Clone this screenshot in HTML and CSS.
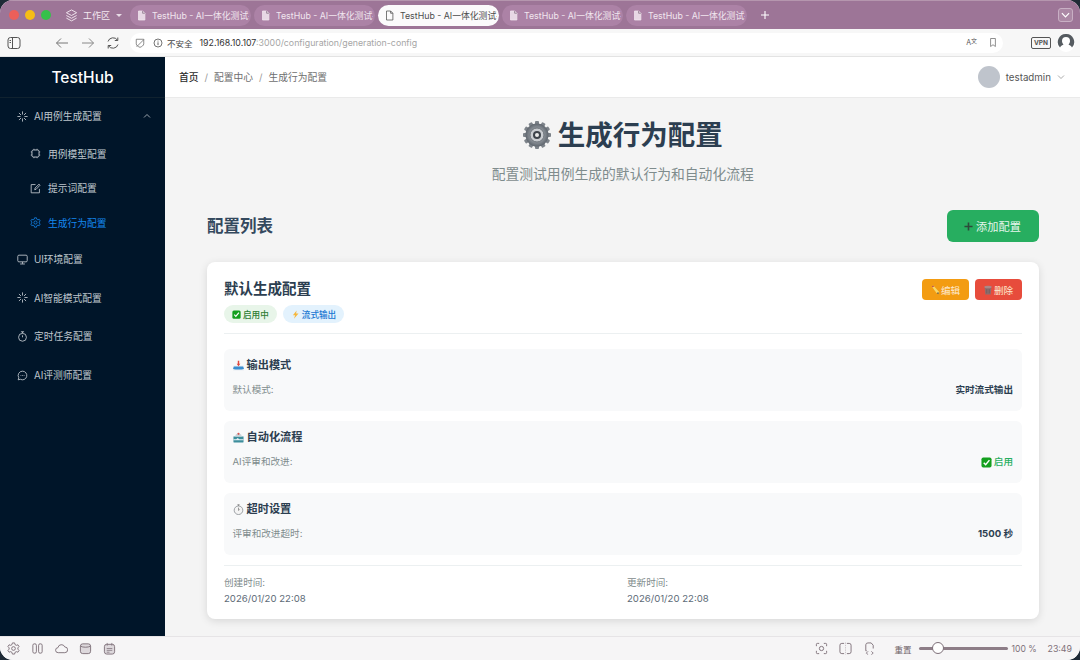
FILE: index.html
```html
<!DOCTYPE html>
<html lang="zh-CN">
<head>
<meta charset="utf-8">
<title>TestHub</title>
<link rel="stylesheet" href="styles.css">
</head>
<body>
<svg class="defs" width="0" height="0" aria-hidden="true">
  <defs>
    <symbol id="doc" viewBox="0 0 12 14"><path d="M2 1h5.5L10.5 4v9H2z" fill="currentColor" fill-opacity=".85" stroke="currentColor" stroke-width="1"/><path d="M7.5 1v3h3" fill="none" stroke="#6d5569" stroke-width=".8"/></symbol>
    <symbol id="spark" viewBox="0 0 14 14"><path d="M7 1v3M7 10v3M1 7h3M10 7h3M2.8 2.8l2 2M9.2 9.2l2 2M11.2 2.8l-2 2M4.8 9.2l-2 2" fill="none" stroke="currentColor" stroke-width="1.1" stroke-linecap="round"/></symbol>
    <symbol id="check" viewBox="0 0 12 12"><rect x=".5" y=".5" width="11" height="11" rx="2" fill="#14a01e"/><path d="M3 6.2l2.1 2.2L9.2 3.4" fill="none" stroke="#fff" stroke-width="1.6"/></symbol>
    <radialGradient id="gearfill"><stop offset="0" stop-color="#e6e8ea"/><stop offset=".6" stop-color="#8d939a"/><stop offset="1" stop-color="#5f666e"/></radialGradient>
  </defs>
</svg>
<div class="window">
  <header class="tabbar">
    <div class="lights"><i class="light red"></i><i class="light yellow"></i><i class="light green"></i></div>
    <svg class="ic-workspace" viewBox="0 0 14 14"><path d="M7 1l5.5 3L7 7 1.500 4zM1.500 7L7 10l5.500-3M1.500 9.800L7 12.800l5.500-3" fill="none" stroke="currentColor" stroke-width="1"/></svg>
    <span class="workspace">工作区</span>
    <i class="caret"></i>
    <div class="tabs">
      <div class="tab"><svg class="tab-ic"><use href="#doc"/></svg><span class="tab-t">TestHub - AI一体化测试平台</span></div>
      <div class="tab"><svg class="tab-ic"><use href="#doc"/></svg><span class="tab-t">TestHub - AI一体化测试平台</span></div>
      <div class="tab active"><svg class="tab-ic" viewBox="0 0 12 14"><path d="M2 1h5.500L10.500 4v9H2z M7.500 1v3h3" fill="none" stroke="currentColor"/></svg><span class="tab-t">TestHub - AI一体化测试平台</span></div>
      <div class="tab"><svg class="tab-ic"><use href="#doc"/></svg><span class="tab-t">TestHub - AI一体化测试平台</span></div>
      <div class="tab"><svg class="tab-ic"><use href="#doc"/></svg><span class="tab-t">TestHub - AI一体化测试平台</span></div>
      <svg class="plus" viewBox="0 0 10 10"><path d="M5 1v8M1 5h8" stroke="#fff" stroke-width="1.100"/></svg>
    </div>
    <div class="tab-menu"><svg viewBox="0 0 10 10"><path d="M2 3.500L5 6.500 8 3.500" fill="none" stroke="#fff" stroke-width="1"/></svg></div>
  </header>

  <nav class="toolbar">
    <svg class="tool t-side" viewBox="0 0 14 14"><rect x="1" y="1.500" width="12" height="11" rx="2.500" fill="none" stroke="currentColor"/><path d="M5.500 1.500v11M2.500 4.500h1.500M2.500 6.500h1.500" stroke="currentColor" fill="none"/></svg>
    <svg class="tool t-back" viewBox="0 0 14 14"><path d="M13 7H1.500M6 2.500L1.500 7 6 11.500" fill="none" stroke="currentColor"/></svg>
    <svg class="tool t-fwd" viewBox="0 0 14 14"><path d="M1 7h11.500M8 2.500L12.500 7 8 11.500" fill="none" stroke="currentColor"/></svg>
    <svg class="tool t-rel" viewBox="0 0 14 14"><path d="M2 5.500A5.300 5.300 0 0 1 11.500 4.200M12 8.500A5.300 5.300 0 0 1 2.500 9.800M11.800 1.500v3h-3M2.200 12.500v-3h3" fill="none" stroke="currentColor"/></svg>
    <div class="address">
      <svg class="a-shield" viewBox="0 0 12 12"><path d="M1.500 1.500h9v5.500c0 2-2.500 3.500-4.500 4.200-2-.7-4.500-2.200-4.500-4.200zM2 10.500L10.500 2" fill="none" stroke="currentColor" stroke-width=".9"/></svg>
      <svg class="a-info" viewBox="0 0 12 12"><circle cx="6" cy="6" r="4.800" fill="none" stroke="currentColor" stroke-width=".9"/><path d="M6 5.200v3.300M6 3.200v1" stroke="currentColor" stroke-width="1"/></svg>
      <span class="insecure">不安全</span>
      <span class="url"><b>192.168.10.107</b>:3000/configuration/generation-config</span>
      <span class="a-space"></span>
      <span class="a-trans"><small>A</small><sup>文</sup></span>
      <svg class="a-mark" viewBox="0 0 10 12"><path d="M2 1h6v10L5 8.800 2 11z" fill="none" stroke="currentColor" stroke-width=".9"/></svg>
    </div>
    <span class="vpn">VPN</span>
    <svg class="t-user" viewBox="0 0 18 18"><circle cx="9" cy="9" r="9" fill="#fff"/><path d="M9 0a8 8 0 0 0-6 13.500c1-1.800 2.500-2.500 3.500-3-1-1-1.500-2.200-1.500-3.500a4 4 0 0 1 8 0c0 1.300-.5 2.500-1.500 3.500 1 .5 2.500 1.200 3.500 3A8 8 0 0 0 9 0z" fill="#555b60"/></svg>
  </nav>

  <div class="app">
    <aside class="sidebar">
      <div class="logo">TestHub</div>
      <ul class="menu">
        <li class="item"><svg class="m-ic"><use href="#spark"/></svg><span>AI用例生成配置</span><svg class="chev" viewBox="0 0 8 6"><path d="M1 4.500L4 1.500l3 3" fill="none" stroke="currentColor" stroke-width=".8"/></svg></li>
        <li class="item sub"><svg class="m-ic" viewBox="0 0 14 14"><rect x="2.500" y="2.500" width="9" height="9" rx="2" fill="none" stroke="currentColor" stroke-width="1.200"/><path d="M5 1v1.500M9 1v1.500M5 11.500V13M9 11.500V13M1 5h1.500M1 9h1.500M11.500 5H13M11.500 9H13" stroke="currentColor"/></svg><span>用例模型配置</span></li>
        <li class="item sub"><svg class="m-ic" viewBox="0 0 14 14"><path d="M12 7.500V12.500H1.500V2H7M6 8.500l.4-2L11.500 1.500 12.800 2.800 7.800 8z" fill="none" stroke="currentColor" stroke-width="1.100"/></svg><span>提示词配置</span></li>
        <li class="item sub current"><svg class="m-ic" viewBox="0 0 14 14"><path d="M5.800 1h2.400l.4 1.800 1.500.8 1.700-.6 1.200 2-1.300 1.300v1.400l1.300 1.300-1.200 2-1.700-.6-1.500.8L8.200 13H5.800l-.4-1.800-1.500-.8-1.700.6-1.200-2L2.300 7.700V6.300L1 5l1.200-2 1.700.6 1.500-.8z" fill="none" stroke="currentColor"/><circle cx="7" cy="7" r="2" fill="none" stroke="currentColor"/></svg><span>生成行为配置</span></li>
        <li class="item after"><svg class="m-ic" viewBox="0 0 14 14"><rect x="1" y="1.500" width="12" height="8.500" rx="1.500" fill="none" stroke="currentColor" stroke-width="1.100"/><path d="M7 10v2.500M4 12.700h6" stroke="currentColor" stroke-width="1.100"/></svg><span>UI环境配置</span></li>
        <li class="item"><svg class="m-ic"><use href="#spark"/></svg><span>AI智能模式配置</span></li>
        <li class="item"><svg class="m-ic" viewBox="0 0 14 14"><circle cx="7" cy="8" r="5" fill="none" stroke="currentColor" stroke-width="1.100"/><path d="M5 1h4M7 1v2M7 5.500V8" stroke="currentColor" stroke-width="1.100"/></svg><span>定时任务配置</span></li>
        <li class="item"><svg class="m-ic" viewBox="0 0 14 14"><path d="M7 1.500a5.500 5.500 0 1 1-2.700 10.300L1.500 12.500l.8-2.600A5.500 5.500 0 0 1 7 1.500z" fill="none" stroke="currentColor" stroke-width="1.100"/><path d="M4.500 7h1M6.500 7h1M8.500 7h1" stroke="currentColor"/></svg><span>AI评测师配置</span></li>
      </ul>
    </aside>

    <div class="main">
      <div class="topbar">
        <div class="crumbs"><b>首页</b><i>/</i><span>配置中心</span><i>/</i><span>生成行为配置</span></div>
        <div class="user"><i class="avatar"></i><span>testadmin</span><svg class="user-chev" viewBox="0 0 8 6"><path d="M1 1.500L4 4.500l3-3" fill="none" stroke="currentColor" stroke-width=".7"/></svg></div>
      </div>

      <main class="content">
        <h1 class="title">
          <svg class="gear" viewBox="0 0 28 28"><g fill="#7d838a"><rect x="12" y="0" width="4" height="28" rx="1"/><rect x="12" y="0" width="4" height="28" rx="1" transform="rotate(30 14 14)"/><rect x="12" y="0" width="4" height="28" rx="1" transform="rotate(60 14 14)"/><rect x="12" y="0" width="4" height="28" rx="1" transform="rotate(90 14 14)"/><rect x="12" y="0" width="4" height="28" rx="1" transform="rotate(120 14 14)"/><rect x="12" y="0" width="4" height="28" rx="1" transform="rotate(150 14 14)"/></g><circle cx="14" cy="14" r="11.500" fill="url(#gearfill)"/><circle cx="14" cy="14" r="7" fill="#c9ccd0" stroke="#6e747b"/><circle cx="14" cy="14" r="4" fill="#3c4249"/><circle cx="14" cy="14" r="2" fill="#e8e8e8"/></svg>
          <span>生成行为配置</span>
        </h1>
        <p class="subtitle">配置测试用例生成的默认行为和自动化流程</p>

        <div class="list-head">
          <h2>配置列表</h2>
          <button class="add"><svg class="add-ic" viewBox="0 0 10 10"><path d="M5 .5v9M.5 5h9" stroke="#2d4a3a" stroke-width="1.800"/></svg>添加配置</button>
        </div>

        <section class="card">
          <div class="card-head">
            <div>
              <h3>默认生成配置</h3>
              <div class="badges">
                <span class="badge on"><svg class="b-ic"><use href="#check"/></svg>启用中</span>
                <span class="badge stream"><svg class="b-ic" viewBox="0 0 12 12"><path d="M7.500 .5L2.500 7h3L4 11.500 10 4.800H6.800z" fill="#f6b73c"/></svg>流式输出</span>
              </div>
            </div>
            <div class="actions">
              <button class="btn edit"><svg class="btn-ic" viewBox="0 0 12 12"><path d="M2 1.500l2-1 7 8-.5 2.500-2.500-1z" fill="#f5d76e"/><path d="M2 1.500l2-1 1 1.200-2 1.100z" fill="#c0504d"/><path d="M10.500 11L8 10l2-1.500z" fill="#5a4a3a"/></svg>编辑</button>
              <button class="btn del"><svg class="btn-ic" viewBox="0 0 12 12"><path d="M2 3h8l-.8 8.500H2.800z" fill="#8d6e6e"/><ellipse cx="6" cy="2.500" rx="4.500" ry="1.500" fill="#a88"/><path d="M4.500 5v5M7.500 5v5" stroke="#6b5252" stroke-width=".7"/></svg>删除</button>
            </div>
          </div>

          <div class="group">
            <h4><svg class="g-ic" viewBox="0 0 12 12"><rect x="0" y="6" width="12" height="5.500" rx="1" fill="#e9edf1"/><path d="M1 7h10l1 2.500c-3 1.300-9 1.300-12 0z" fill="#3b8ed0"/><path d="M4 4h1.200V.800h1.600V4H8L6 6.700z" fill="#e0483e"/></svg>输出模式</h4>
            <div class="row"><span>默认模式:</span><b>实时流式输出</b></div>
          </div>
          <div class="group">
            <h4><svg class="g-ic" viewBox="0 0 12 12"><path d="M.5 5h11v5.500a1 1 0 0 1-1 1h-9a1 1 0 0 1-1-1z" fill="#3d8e9c"/><path d="M2.500 5a3.500 3.500 0 0 1 7 0z" fill="#c9d4da"/><path d="M.5 8h3L5 6.500 7 8h4.500v1h-11z" fill="#e8f2f5"/><circle cx="6" cy="2" r="1.200" fill="#d9534f"/></svg>自动化流程</h4>
            <div class="row"><span>AI评审和改进:</span><b class="enabled"><svg class="b-ic big"><use href="#check"/></svg>启用</b></div>
          </div>
          <div class="group">
            <h4><svg class="g-ic" viewBox="0 0 12 12"><circle cx="6" cy="6.800" r="4.700" fill="#f4f4f4" stroke="#8a8f94" stroke-width=".9"/><path d="M4.800.8h2.400M6 .8v1.400M6 4v3l1.300-1" fill="none" stroke="#777" stroke-width=".8"/></svg>超时设置</h4>
            <div class="row"><span>评审和改进超时:</span><b>1500 秒</b></div>
          </div>

          <div class="meta">
            <div><span>创建时间:</span><time>2026/01/20 22:08</time></div>
            <div><span>更新时间:</span><time>2026/01/20 22:08</time></div>
          </div>
        </section>
      </main>
    </div>
  </div>

  <footer class="status">
    <svg class="st" viewBox="0 0 14 14"><path d="M5.800 1h2.400l.4 1.800 1.500.8 1.700-.6 1.200 2-1.300 1.300v1.400l1.300 1.300-1.200 2-1.700-.6-1.500.8L8.200 13H5.800l-.4-1.800-1.500-.8-1.700.6-1.200-2L2.300 7.700V6.300L1 5l1.200-2 1.700.6 1.500-.8z" fill="none" stroke="currentColor"/><circle cx="7" cy="7" r="2" fill="none" stroke="currentColor"/></svg>
    <svg class="st" viewBox="0 0 14 14"><rect x="2" y="2" width="3.800" height="10" rx="1.500" fill="none" stroke="currentColor"/><rect x="8.200" y="2" width="3.800" height="10" rx="1.500" fill="none" stroke="currentColor"/></svg>
    <svg class="st" viewBox="0 0 14 14"><path d="M3.500 11.500a2.700 2.700 0 0 1-.3-5.400A3.800 3.800 0 0 1 10.500 5.300a3.100 3.100 0 0 1 0 6.200z" fill="none" stroke="currentColor"/></svg>
    <svg class="st" viewBox="0 0 14 14"><rect x="1.500" y="2" width="11" height="10.500" rx="2.500" fill="#ddd8dc" stroke="currentColor"/><path d="M1.500 4.500c3 1.500 8 1.500 11 0" fill="none" stroke="currentColor"/></svg>
    <svg class="st" viewBox="0 0 14 14"><rect x="1.500" y="2.500" width="11" height="10.500" rx="2.500" fill="#ddd8dc" stroke="currentColor"/><path d="M4.500 1v3M9.500 1v3M4 7h6M4 9h6M4 11h3" fill="none" stroke="currentColor" stroke-width=".8"/></svg>
    <span class="st-space"></span>
    <svg class="st" viewBox="0 0 14 14"><path d="M1.500 4.500v-2a1 1 0 0 1 1-1h2M9.500 1.500h2a1 1 0 0 1 1 1v2M12.500 9.500v2a1 1 0 0 1-1 1h-2M4.500 12.500h-2a1 1 0 0 1-1-1v-2" fill="none" stroke="currentColor"/><circle cx="7" cy="7" r="2.300" fill="none" stroke="currentColor"/></svg>
    <svg class="st" viewBox="0 0 14 14"><path d="M5.500 1.500H3a2 2 0 0 0-2 2v7a2 2 0 0 0 2 2h2.500M8.500 1.500H11a2 2 0 0 1 2 2v7a2 2 0 0 1-2 2H8.500" fill="none" stroke="currentColor"/><path d="M7 .5v13" stroke="#c9c3c8" stroke-dasharray="1.500 1"/></svg>
    <svg class="st" viewBox="0 0 14 14"><path d="M4 9.500H3V3a2.300 2.300 0 0 1 2.300-2h3.500L11 3.500V7" fill="none" stroke="currentColor"/><path d="M5.500 10l-2 2 2 1.500M9 10l2 2-2 1.500" fill="none" stroke="currentColor" stroke-width=".9"/></svg>
    <span class="reset">重置</span>
    <div class="slider"><i class="thumb"></i></div>
    <span class="pct">100 %</span>
    <span class="clock">23:49</span>
  </footer>
</div>
</body>
</html>
```

FILE: styles.css
```css
* { box-sizing: border-box; }
html, body { margin: 0; height: 100%; }
body {
  width: 1080px; height: 660px; overflow: hidden; background: #1e2a36;
  font-family: "Inter", "Noto Sans CJK SC", sans-serif;
}
.defs { display: block; height: 0; }
ul { list-style: none; margin: 0; padding: 0; }
h1, h2, h3, h4, p { margin: 0; }
button { font-family: inherit; border: 0; padding: 0; }

.window {
  width: 1080px; height: 660px; display: flex; flex-direction: column;
  border-radius: 13px; overflow: hidden; background: #f6f5f6;
}

/* browser chrome */
.tabbar {
  flex: none; height: 29px; background: #9d7597; color: #f3e9f1;
  border-top: 1px solid #b596ae;
  display: flex; align-items: center; padding-left: 9px;
}
.lights { display: flex; gap: 6px; }
.light { width: 10px; height: 10px; border-radius: 50%; display: block; }
.red { background: #ec5f5a; }
.yellow { background: #f6bd15; }
.green { background: #35c14a; }
.ic-workspace { width: 13px; height: 13px; margin-left: 14px; }
.workspace { margin-left: 5px; font-size: 9px; width: 28px; }
.caret { margin-left: 5px; width: 0; height: 0; border: 3px solid transparent; border-top: 3.500px solid #e8dce6; border-bottom: 0; }
.tabs { display: flex; gap: 3px; margin-left: 8px; align-items: center; }
.tab {
  width: 121px; height: 21px; border-radius: 10.500px; background: #ac82a6;
  display: flex; align-items: center; padding: 0 2px 0 7px; color: #f1e6ef; overflow: hidden;
}
.tab.active { background: #fbfafb; color: #4d4d4d; }
.tab-ic { width: 9px; height: 11px; flex: none; margin-right: 6px; }
.tab-t { font-size: 8.800px; white-space: nowrap; overflow: hidden; }
.plus { width: 10px; height: 10px; margin-left: 10px; }
.tab-menu {
  margin-left: auto; margin-right: 7px; width: 15px; height: 14px;
  border: 1px solid #c8afc4; border-radius: 3px; background: #ab88a5; display: flex;
}
.tab-menu svg { width: 13px; height: 12px; }

.toolbar {
  flex: none; height: 28px; background: #f7f7f7; color: #555;
  display: flex; align-items: center; border-bottom: 1px solid #e3e3e3; padding-left: 7px;
}
.tool { width: 14px; height: 14px; flex: none; }
.t-back { margin-left: 34px; color: #777; }
.t-fwd { margin-left: 12px; color: #888; }
.t-rel { margin-left: 11px; }
.address {
  margin-left: 10px; width: 873px; height: 20px; background: #fff; border-radius: 10px;
  display: flex; align-items: center; padding-left: 4px; color: #666;
}
.a-shield { width: 10px; height: 10px; margin-left: 1px; }
.a-info { width: 10px; height: 10px; margin-left: 8px; color: #444; }
.insecure { font-size: 8.500px; margin-left: 4px; color: #444; }
.url { font-size: 8.800px; margin-left: 7px; color: #a6a6a6; }
.url b { font-weight: 400; color: #333; }
.a-space { flex: 1; }
.a-trans { font-size: 7px; color: #555; display: flex; line-height: 1; margin-right: 12px; align-items: flex-end; }
.a-trans small { font-size: 7px; }
.a-trans sup { font-size: 6px; margin: -4px 0 2px; }
.a-mark { width: 8px; height: 11px; margin-right: 6px; }
.vpn {
  margin-left: 28px; width: 20px; height: 12px; border: 1px solid #555; border-radius: 2px;
  font-size: 6.500px; font-weight: 700; color: #555; text-align: center; line-height: 10px;
}
.t-user { width: 18px; height: 18px; margin-left: 6px; }

/* app */
.app { flex: 1; min-height: 0; display: flex; }
.sidebar { flex: none; width: 165px; background: #001529; color: #bfc6cd; }
.logo {
  height: 41px; border-bottom: 1px solid #10222f; color: #fff;
  font-size: 15.500px; font-weight: 500; text-align: center; line-height: 41px;
}
.menu { padding-top: 3px; display: flex; flex-direction: column; gap: 3.800px; }
.item {
  height: 30.700px; display: flex; align-items: center; padding-left: 17px;
  font-size: 9.750px; position: relative;
}
.item .m-ic { width: 11px; height: 11px; flex: none; margin-right: 6px; }
.item.after { margin-top: 2px; margin-bottom: 4px; }
.item + .item:not(.sub):not(.after) { margin-bottom: 4.200px; }
.item.sub { padding-left: 30px; }
.item.sub .m-ic { margin-right: 7px; }
.item.current { color: #1487ee; }
.chev { width: 8px; height: 6px; margin-left: auto; margin-right: 14px; }
.item:first-child { margin-bottom: 3px; }

.main { flex: 1; min-width: 0; display: flex; flex-direction: column; background: #f4f4f4; }
.topbar {
  flex: none; height: 41px; background: #fff; border-bottom: 1px solid #eaeaea;
  display: flex; align-items: center; justify-content: space-between; padding: 0 15px 0 14px;
}
.crumbs { font-size: 9.750px; color: #6e6e6e; display: flex; align-items: center; }
.crumbs b { font-weight: 500; color: #2b2b2b; }
.crumbs i { font-style: normal; margin: 0 6px; color: #999; }
.user { display: flex; align-items: center; font-size: 9.750px; color: #555; }
.avatar { width: 22px; height: 22px; border-radius: 50%; background: #bfc4cc; margin-right: 6px; }
.user-chev { width: 8px; height: 6px; margin-left: 6px; color: #888; }

.content { flex: 1; min-height: 0; overflow: hidden; padding: 20px 41.500px 0 42px; }
.title {
  display: flex; align-items: center; justify-content: center; gap: 7px;
  font-size: 27.500px; font-weight: 700; color: #2c3e50; line-height: 34px;
}
.gear { width: 28px; height: 28px; }
.subtitle { margin-top: 12px; text-align: center; font-size: 13.800px; line-height: 20px; color: #7f8c8d; }
.list-head { margin-top: 26px; display: flex; align-items: center; justify-content: space-between; }
.list-head h2 { font-size: 16.500px; font-weight: 700; color: #34495e; line-height: 32px; }
.add {
  width: 92px; height: 32px; background: #27ae60; border-radius: 6px; color: #e6f6ec;
  font-size: 11.200px; display: flex; align-items: center; justify-content: center; gap: 3px;
}
.add-ic { width: 9px; height: 9px; }

.card {
  margin-top: 20px; background: #fff; border-radius: 8px; padding: 17px 17px 0;
  height: 357px; box-shadow: 0 2px 8px rgba(0, 0, 0, .12);
}
.card-head {
  display: flex; justify-content: space-between; border-bottom: 1px solid #ecf0f1; height: 55px;
}
.card-head h3 { font-size: 14.500px; font-weight: 700; color: #2c3e50; line-height: 20px; }
.badges { display: flex; gap: 6px; margin-top: 6px; }
.badge {
  height: 18px; border-radius: 9px; padding: 0 8px; font-size: 8.600px; font-weight: 500;
  display: flex; align-items: center; gap: 2px;
}
.badge.on { background: #e8f5e9; color: #2e7d32; }
.badge.stream { background: #e3f2fd; color: #1976d2; }
.b-ic { width: 9px; height: 9px; }
.b-ic.big { width: 11px; height: 11px; margin-right: 2px; }
.actions { display: flex; gap: 6px; margin-top: 0; align-items: flex-start; }
.btn {
  width: 47px; height: 21px; border-radius: 4px; color: #fde9d0; font-size: 9.600px;
  display: flex; align-items: center; justify-content: center; gap: 1px;
}
.btn-ic { width: 10px; height: 10px; }
.edit { background: #f39c12; }
.del { background: #e74c3c; }

.group { margin-top: 10.500px; height: 61.500px; background: #f8f9fa; border-radius: 6px; padding: 8px 8.500px 0; }
.card-head + .group { margin-top: 15px; }
.group h4 {
  font-size: 11.200px; font-weight: 700; color: #2c3e50; line-height: 16px;
  display: flex; align-items: center; gap: 3px;
}
.g-ic { width: 11px; height: 11px; }
.row { margin-top: 10px; display: flex; justify-content: space-between; align-items: center; font-size: 9.600px; line-height: 14px; color: #7f8c8d; }
.row b { font-weight: 700; color: #2c3e50; display: flex; align-items: center; }
.row b.enabled { color: #27ae60; font-weight: 500; }

.meta {
  margin-top: 10px; border-top: 1px solid #ecf0f1; padding-top: 9px;
  display: grid; grid-template-columns: 403px 1fr;
  font-size: 9.600px; color: #7f8c8d;
}
.meta span, .meta time { display: block; line-height: 15px; }
.meta time { margin-top: 1px; color: #5e6c78; }

/* status bar */
.status {
  flex: none; height: 24px; background: #f6f5f6; border-top: 1px solid #e6e4e6; color: #7e7079;
  display: flex; align-items: center; padding-left: 7px; position: relative;
}
.st { width: 13px; height: 13px; flex: none; margin-right: 11px; }
.st-space { flex: 1; }
.reset { font-size: 8.500px; margin-left: 8px; width: 17px; color: #6f6269; white-space: nowrap; }
.slider { margin-left: 7px; width: 89px; height: 3px; border-radius: 2px; background: #8d7d87; position: relative; }
.thumb {
  position: absolute; left: 13px; top: -5px; width: 12px; height: 12px; border-radius: 50%;
  background: #fff; border: 1px solid #7e7079;
}
.pct { font-size: 8.600px; margin-left: 4px; width: 24px; white-space: nowrap; }
.clock { font-size: 8.800px; margin-left: 12px; margin-right: 8px; }
```
